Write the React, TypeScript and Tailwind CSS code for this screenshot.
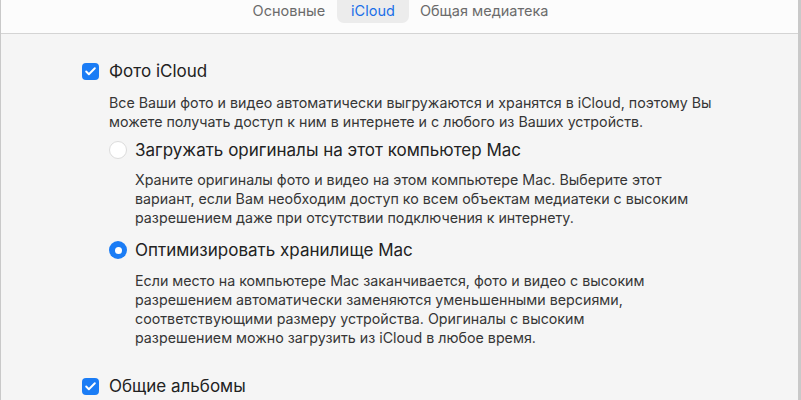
import { Check } from 'lucide-react';

const font = { fontFamily: 'Inter, "Noto Sans", sans-serif' };

function Checkbox() {
  return (
    <div className="w-[17px] h-[17px] rounded-[4px] bg-[#1a7cf5] flex items-center justify-center shrink-0">
      <Check className="w-[13px] h-[13px] text-white" strokeWidth={3.5} />
    </div>
  );
}

function Radio({ checked }: { checked: boolean }) {
  if (checked) {
    return (
      <div className="w-[18px] h-[18px] rounded-full bg-[#1a7cf5] flex items-center justify-center shrink-0">
        <div className="w-[7px] h-[7px] rounded-full bg-white" />
      </div>
    );
  }
  return <div className="w-[18px] h-[18px] rounded-full bg-white border border-[#dcdcdc] shrink-0" />;
}

export default function App() {
  return (
    <div className="w-[801px] h-[400px] overflow-hidden bg-[#f5f5f5] border-l border-r-[3px] border-[#c9c9c9] text-[#222]" style={font}>
      {/* Tabs */}
      <div className="h-[34px] bg-[#fcfcfc] border-b border-[#d4d4d4] flex justify-center pl-[2px] text-[14.5px] leading-[21px]">
        <div className="pr-[12px] text-[#6b6b6b]">Основные</div>
        <div className="px-[14px] h-[23px] rounded-b-[7px] bg-[#ececec] text-[#1a6fe8]">iCloud</div>
        <div className="pl-[11px] text-[#6b6b6b]">Общая медиатека</div>
      </div>

      <div className="pl-[81px] pt-[27px]">
        <div className="flex items-center gap-[10px] h-[20px]">
          <Checkbox />
          <span className="text-[17px] leading-[20px]">Фото iCloud</span>
        </div>
        <p className="pl-[27px] mt-[12px] text-[14.25px] leading-[19px] text-[#363636]">
          Все Ваши фото и видео автоматически выгружаются и хранятся в iCloud, поэтому Вы
          <br />
          можете получать доступ к ним в интернете и с любого из Ваших устройств.
        </p>

        <div className="pl-[27px] mt-[9px]">
          <div className="flex items-center gap-[8px] h-[20px]">
            <Radio checked={false} />
            <span className="text-[17px] leading-[20px]">Загружать оригиналы на этот компьютер Mac</span>
          </div>
          <p className="pl-[26px] mt-[10px] text-[14.25px] leading-[19px] text-[#363636]">
            Храните оригиналы фото и видео на этом компьютере Mac. Выберите этот
            <br />
            вариант, если Вам необходим доступ ко всем объектам медиатеки с высоким
            <br />
            разрешением даже при отсутствии подключения к интернету.
          </p>

          <div className="flex items-center gap-[8px] h-[20px] mt-[13px]">
            <Radio checked />
            <span className="text-[17px] leading-[20px]">Оптимизировать хранилище Mac</span>
          </div>
          <p className="pl-[26px] mt-[11px] text-[14.25px] leading-[19px] text-[#363636]">
            Если место на компьютере Mac заканчивается, фото и видео с высоким
            <br />
            разрешением автоматически заменяются уменьшенными версиями,
            <br />
            соответствующими размеру устройства. Оригиналы с высоким
            <br />
            разрешением можно загрузить из iCloud в любое время.
          </p>
        </div>

        <div className="flex items-center gap-[10px] h-[20px] mt-[29px]">
          <Checkbox />
          <span className="text-[17px] leading-[20px]">Общие альбомы</span>
        </div>
      </div>
    </div>
  );
}
